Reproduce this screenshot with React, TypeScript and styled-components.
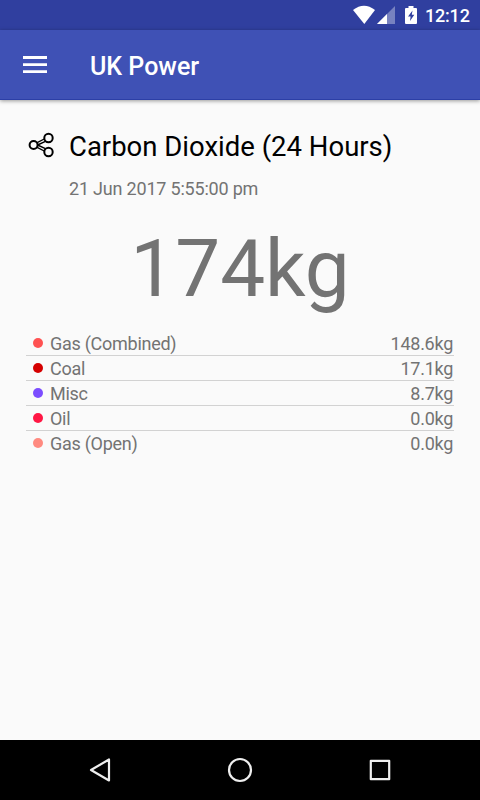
import React from "react";
import styled, { createGlobalStyle } from "styled-components";

const GlobalStyle = createGlobalStyle`
  body { margin: 0; background: #fafafa; }
  * { box-sizing: border-box; }
`;

const Screen = styled.div`
  width: 480px;
  height: 800px;
  display: flex;
  flex-direction: column;
  overflow: hidden;
  background: #fafafa;
  font-family: Roboto, sans-serif;
  color: #737373;
`;

const StatusBar = styled.header`
  height: 30px;
  flex: none;
  display: flex;
  justify-content: flex-end;
  background: #303f9f;
  color: #fff;
`;

const StatusIcons = styled.svg`
  width: 72px;
  height: 30px;
  flex: none;
`;

const Clock = styled.time`
  width: 55px;
  font-size: 18px;
  font-weight: 500;
  letter-spacing: -0.2px;
  line-height: 32px;
  white-space: nowrap;
`;

const AppBar = styled.div`
  height: 70px;
  flex: none;
  display: flex;
  align-items: center;
  padding-left: 23px;
  background: #3f51b5;
  border-bottom: 1px solid #2c3fa6;
  box-shadow: 0 1px 4px rgba(0, 0, 0, 0.4);
  color: #fff;
`;

const MenuIcon = styled.svg`
  width: 24px;
  height: 18px;
  margin-right: 43px;
`;

const AppTitle = styled.h1`
  margin: 5px 0 0;
  font-size: 25px;
  font-weight: 500;
  line-height: 30px;
`;

const Content = styled.main`
  flex: 1;
  display: flex;
  flex-direction: column;
  padding: 28px 26px 0;
`;

const Heading = styled.div`
  display: grid;
  grid-template-columns: 43px 1fr;
  align-items: center;
`;

const ShareIcon = styled.svg`
  width: 30px;
  height: 30px;
  margin-top: -4px;
`;

const Title = styled.h2`
  margin: 0;
  padding-top: 1px;
  font-size: 27.5px;
  font-weight: 400;
  line-height: 36px;
  color: #000;
  white-space: nowrap;
`;

const Timestamp = styled.time`
  grid-column: 2;
  margin-top: 13px;
  font-size: 18px;
  letter-spacing: -0.2px;
  line-height: 22px;
`;

const Total = styled.div`
  margin-top: 21px;
  height: 109px;
  font-size: 80px;
  line-height: 96px;
  text-align: center;
`;

const SourceList = styled.ul`
  list-style: none;
  margin: 0;
  padding: 0;
`;

const SourceRow = styled.li`
  height: 25px;
  display: flex;
  align-items: center;
  padding: 2px 1px 0 7px;
  font-size: 18px;
  letter-spacing: -0.27px;
  line-height: 22px;

  & + & {
    border-top: 1px solid #d2d2d2;
    padding-top: 1px;
  }
`;

const Dot = styled.span<{ $color: string }>`
  width: 10px;
  height: 10px;
  margin: -2px 7px 0 0;
  border-radius: 50%;
  background: ${(p) => p.$color};
`;

const Amount = styled.span`
  margin-left: auto;
`;

const NavBar = styled.nav`
  height: 60px;
  flex: none;
  display: flex;
  justify-content: space-between;
  align-items: center;
  padding: 0 85px;
  background: #000;
`;

const NavIcon = styled.svg`
  width: 30px;
  height: 30px;
  fill: none;
  stroke: #eee;
  stroke-width: 2.2;
  stroke-linejoin: round;
`;

const sources = [
  { name: "Gas (Combined)", amount: "148.6kg", color: "#ff5252" },
  { name: "Coal", amount: "17.1kg", color: "#d50000" },
  { name: "Misc", amount: "8.7kg", color: "#7c4dff" },
  { name: "Oil", amount: "0.0kg", color: "#ff1744" },
  { name: "Gas (Open)", amount: "0.0kg", color: "#ff8a80" },
];

export default function App() {
  return (
    <Screen>
      <GlobalStyle />
      <StatusBar>
        <StatusIcons viewBox="0 0 72 30" fill="#fff">
          <path d="M0 10Q11 1.5 22 10L11.3 24Z" />
          <path d="M42 6V24H24Z" opacity=".35" />
          <path d="M34 14V24H24Z" />
          <path
            fillRule="evenodd"
            d="M55.5 6h5v2h2.5q1 0 1 1v14q0 1-1 1H53q-1 0-1-1V9q0-1 1-1h2.5ZM59.5 10.5L55 16.5H57.6L57 21L61.3 14.8H58.8Z"
          />
        </StatusIcons>
        <Clock>12:12</Clock>
      </StatusBar>
      <AppBar>
        <MenuIcon viewBox="0 0 24 18" fill="#fff">
          <path d="M0 0h24v3H0zM0 7.3h24v2.7H0zM0 14.3h24v2.7H0z" />
        </MenuIcon>
        <AppTitle>UK Power</AppTitle>
      </AppBar>
      <Content>
        <Heading>
          <ShareIcon viewBox="0 0 30 30" fill="none" stroke="#000" strokeWidth="2">
            <g strokeWidth="1.4">
              <path d="M10.7 12.8L18.2 9M11.6 15L19.4 11.3M11.6 15L19.4 18.7M10.7 17.2L18.2 21" />
            </g>
            <circle cx="7.6" cy="15" r="4" />
            <circle cx="22.5" cy="8" r="4.2" />
            <circle cx="22.5" cy="22" r="4.2" />
          </ShareIcon>
          <Title>Carbon Dioxide (24 Hours)</Title>
          <Timestamp>21 Jun 2017 5:55:00 pm</Timestamp>
        </Heading>
        <Total>174kg</Total>
        <SourceList>
          {sources.map((s) => (
            <SourceRow key={s.name}>
              <Dot $color={s.color} />
              <span>{s.name}</span>
              <Amount>{s.amount}</Amount>
            </SourceRow>
          ))}
        </SourceList>
      </Content>
      <NavBar>
        <NavIcon viewBox="0 0 30 30">
          <path d="M6 15L24 4.5V25.5Z" />
        </NavIcon>
        <NavIcon viewBox="0 0 30 30">
          <circle cx="15" cy="15" r="11" />
        </NavIcon>
        <NavIcon viewBox="0 0 30 30">
          <rect x="5.8" y="5.8" width="18.4" height="18.4" />
        </NavIcon>
      </NavBar>
    </Screen>
  );
}
